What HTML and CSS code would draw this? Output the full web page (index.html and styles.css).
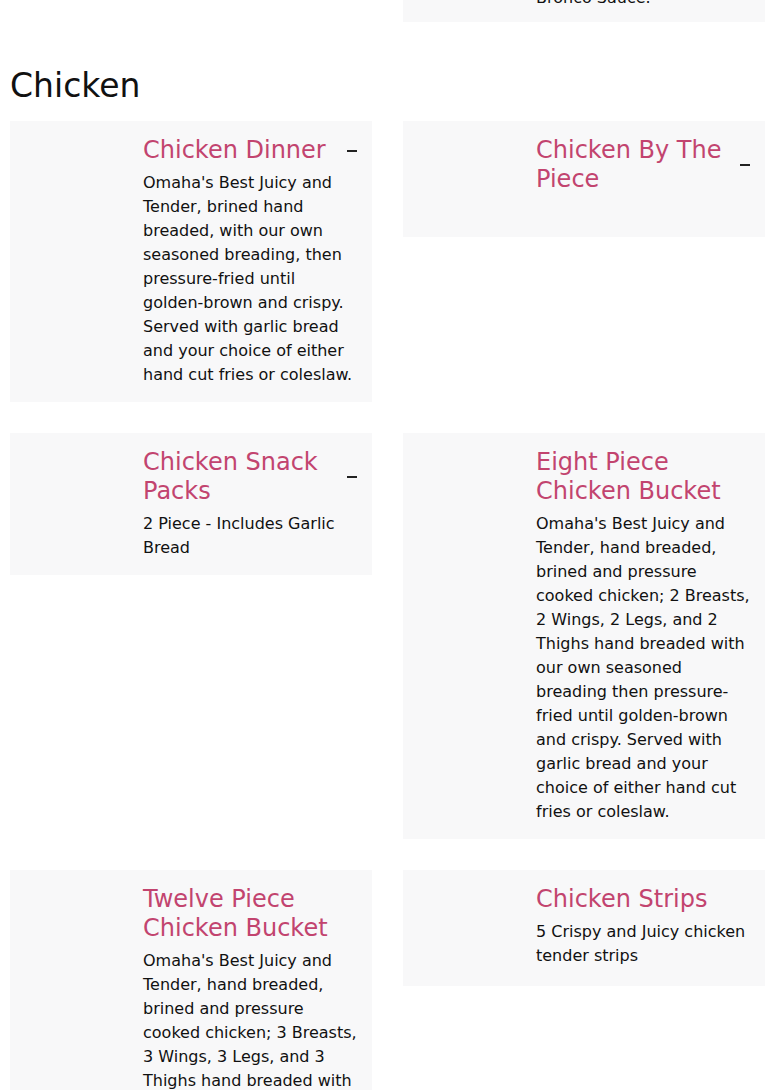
FILE: index.html
```html
<!DOCTYPE html>
<html lang="en">
<head>
<meta charset="utf-8">
<title>Menu - Chicken</title>
<link rel="stylesheet" href="styles.css">
</head>
<body>
<main class="page">
  <div class="grid prev">
    <div class="cell-empty"></div>
    <article class="card prev-card">
      <div class="thumb"></div>
      <div class="body">
        <div class="head"><h3 class="title">Tenders</h3></div>
        <p class="desc">Hand breaded tenders<br>served with<br>Bronco Sauce.</p>
      </div>
    </article>
  </div>

  <section class="category">
    <h2 class="cat-title">Chicken</h2>
    <div class="grid">
      <article class="card">
        <div class="thumb"></div>
        <div class="body">
          <div class="head">
            <h3 class="title">Chicken Dinner</h3>
            <span class="minus"></span>
          </div>
          <p class="desc">Omaha's Best Juicy and Tender, brined hand breaded, with our own seasoned breading, then pressure-fried until golden-brown and crispy. Served with garlic bread and your choice of either hand cut fries or coleslaw.</p>
        </div>
      </article>
      <article class="card">
        <div class="thumb"></div>
        <div class="body">
          <div class="head">
            <h3 class="title">Chicken By The Piece</h3>
            <span class="minus"></span>
          </div>
        </div>
      </article>
      <article class="card">
        <div class="thumb"></div>
        <div class="body">
          <div class="head">
            <h3 class="title">Chicken Snack Packs</h3>
            <span class="minus"></span>
          </div>
          <p class="desc">2 Piece - Includes Garlic Bread</p>
        </div>
      </article>
      <article class="card">
        <div class="thumb"></div>
        <div class="body">
          <div class="head">
            <h3 class="title">Eight Piece Chicken Bucket</h3>
          </div>
          <p class="desc">Omaha's Best Juicy and Tender, hand breaded, brined and pressure cooked chicken; 2 Breasts, 2 Wings, 2 Legs, and 2 Thighs hand breaded with our own seasoned breading then pressure-fried until golden-brown and crispy. Served with garlic bread and your choice of either hand cut fries or coleslaw.</p>
        </div>
      </article>
      <article class="card">
        <div class="thumb"></div>
        <div class="body">
          <div class="head">
            <h3 class="title">Twelve Piece Chicken Bucket</h3>
          </div>
          <p class="desc">Omaha's Best Juicy and Tender, hand breaded, brined and pressure cooked chicken; 3 Breasts, 3 Wings, 3 Legs, and 3 Thighs hand breaded with our own seasoned breading then pressure-fried until golden-brown and crispy. Served with garlic bread and your choice of either hand cut fries or coleslaw.</p>
        </div>
      </article>
      <article class="card">
        <div class="thumb"></div>
        <div class="body">
          <div class="head">
            <h3 class="title">Chicken Strips</h3>
          </div>
          <p class="desc">5 Crispy and Juicy chicken tender strips</p>
        </div>
      </article>
    </div>
  </section>
</main>
</body>
</html>
```
FILE: styles.css
```css
html, body {
  margin: 0;
  padding: 0;
  background: #ffffff;
}

body {
  font-family: "DejaVu Sans", "Noto Sans", sans-serif;
  color: #111111;
  overflow: hidden;
}

.page {
  padding: 0 10px;
}

.grid {
  display: grid;
  grid-template-columns: 1fr 1fr;
  column-gap: 31px;
  row-gap: 31px;
  align-items: start;
}

/* the previous category, scrolled mostly out of view */
.prev {
  margin-top: -112px;
}

.prev-card {
  padding-bottom: 12px;
}

.cat-title {
  margin: 44px 0 15px;
  font-size: 33px;
  line-height: 40px;
  font-weight: normal;
  color: #111111;
}

.card {
  display: flex;
  gap: 15px;
  padding: 15px;
  background: #f8f8f9;
}

.card.prev-card {
  padding-bottom: 12px;
}

.thumb {
  flex: none;
  width: 103px;
  height: 86px;
}

.body {
  flex: 1;
  min-width: 0;
}

.head {
  display: flex;
  align-items: center;
  gap: 10px;
}

.title {
  flex: 1;
  margin: 0;
  font-size: 24px;
  line-height: 29px;
  font-weight: normal;
  color: #c2446f;
}

.minus {
  flex: none;
  width: 10px;
  height: 2px;
  background: #222222;
}

.desc {
  margin: 6px 0 0;
  font-size: 16px;
  line-height: 24px;
  color: #111111;
}
```
